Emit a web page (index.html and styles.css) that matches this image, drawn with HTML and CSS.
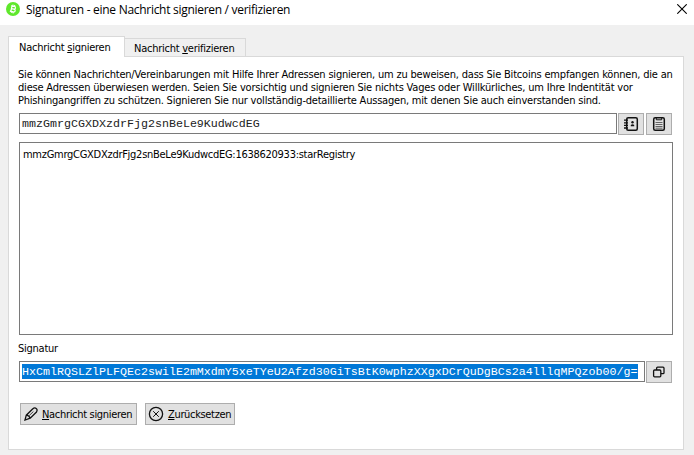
FILE: index.html
```html
<!DOCTYPE html>
<html lang="de">
<head>
<meta charset="utf-8">
<title>Signaturen - eine Nachricht signieren / verifizieren</title>
<link rel="stylesheet" href="styles.css">
</head>
<body>
<header class="titlebar">
  <svg class="logo" viewBox="0 0 14 14"><circle cx="7" cy="7" r="7" fill="#5fe82c"/><g transform="rotate(12 7 7)" fill="none" stroke="#fff" stroke-width="1.2"><path d="M4.4 4.2H7.8a1.3 1.3 0 0 1 0 2.7H5.4M5.4 4.2V9.8M4.4 9.8H8a1.4 1.4 0 0 0 0-2.9M6.2 2.8v1.4M7.9 2.8v1.4M6.2 9.8v1.4M7.9 9.8v1.4"/></g></svg>
  <h1 class="title">Signaturen - eine Nachricht signieren / verifizieren</h1>
  <svg class="close" viewBox="0 0 10 10"><path d="M.3.3l9.4 9.4M9.7.3L.3 9.7" stroke="#000" stroke-width="1.1"/></svg>
</header>
<main class="dialog">
  <nav class="tabs">
    <div class="tab active"><span class="t-sign">Nachricht <u>s</u>ignieren</span></div>
    <div class="tab"><span class="t-verify">Nachricht <u>v</u>erifizieren</span></div>
  </nav>
  <section class="panel">
    <div class="intro">
      <div class="line l1">Sie können Nachrichten/Vereinbarungen mit Hilfe Ihrer Adressen signieren, um zu beweisen, dass Sie Bitcoins empfangen können, die an</div>
      <div class="line l2">diese Adressen überwiesen werden. Seien Sie vorsichtig und signieren Sie nichts Vages oder Willkürliches, um Ihre Indentität vor</div>
      <div class="line l3">Phishingangriffen zu schützen. Signieren Sie nur vollständig-detaillierte Aussagen, mit denen Sie auch einverstanden sind.</div>
    </div>
    <div class="row address-row">
      <div class="field mono address">mmzGmrgCGXDXzdrFjg2snBeLe9KudwcdEG</div>
      <div class="btn icon-btn"><svg width="16" height="16" viewBox="0 0 16 16" fill="none" stroke="#111"><rect x="3.7" y="1.7" width="10.6" height="12.6" rx="1.5" stroke-width="1.5"/><path d="M1 4.2h4M1 6.8h4M1 9.4h4M1 12h4" stroke-width="1.3"/><circle cx="9.5" cy="6.2" r="1.2" fill="#111" stroke="none"/><path d="M7.8 10.2V9q1.7-1.6 3.4 0v1.2z" fill="#111" stroke="none"/></svg></div>
      <div class="btn icon-btn second"><svg width="16" height="16" viewBox="0 0 16 16" fill="none" stroke="#111"><rect x="2.7" y="1.7" width="10.6" height="12.6" rx="1.5" stroke-width="1.5"/><path d="M5.3 1.5v2.3h5.4V1.5" stroke-width="1"/><path d="M4.5 6.5h7M4.5 8.5h7M4.5 10.5h7M4.5 12.2h7" stroke="#555" stroke-width=".9"/></svg></div>
    </div>
    <div class="message"><span class="msg">mmzGmrgCGXDXzdrFjg2snBeLe9KudwcdEG:1638620933:starRegistry</span></div>
    <div class="label"><span class="sig-label">Signatur</span></div>
    <div class="row signature-row">
      <div class="field mono signature"><span class="selection">HxCmlRQSLZlPLFQEc2swilE2mMxdmY5xeTYeU2Afzd30GiTsBtK0wphzXXgxDCrQuDgBCs2a4lllqMPQzob00/g=</span></div>
      <div class="btn icon-btn"><svg width="14" height="14" viewBox="0 0 14 14" fill="none" stroke="#111" stroke-width="1.3"><path d="M4.6 5V3.2q0-1 1-1h5.4q1 0 1 1v4.5q0 1-1 1H9"/><rect x="1.6" y="5" width="7.2" height="6.8" rx="1"/></svg></div>
    </div>
    <div class="actions">
      <div class="btn sign-btn"><svg width="14" height="14" viewBox="0 0 14 14" fill="none" stroke="#111" stroke-width="1.3"><path d="M1 13l1.3-4.8L8.6 2q2-1.8 3.6-.6t.3 3.6L6.2 11.2zM2.3 8.2q2.7.1 3.9 3"/><path d="M5.2 8.6L9.4 4.5" stroke-width=".8"/></svg><span class="b-sign"><u>N</u>achricht signieren</span></div>
      <div class="btn reset-btn"><svg width="16" height="16" viewBox="0 0 16 16" fill="none" stroke="#111"><circle cx="8" cy="8" r="6.6" stroke-width="1.3"/><path d="M5.2 5.2l5.6 5.6M10.8 5.2l-5.6 5.6" stroke-width="1"/></svg><span class="b-reset"><u>Z</u>urücksetzen</span></div>
    </div>
  </section>
</main>
</body>
</html>
```

FILE: styles.css
```css
* { box-sizing: border-box; }
body { margin: 0; width: 694px; height: 455px; overflow: hidden; background: #f0f0f0; color: #000; font: 11px/13px "DejaVu Sans Condensed", "DejaVu Sans", sans-serif; font-stretch: condensed; display: flex; flex-direction: column; }
svg { display: block; flex: none; }
u { text-decoration: underline; text-underline-offset: 1px; text-decoration-thickness: 1px; text-decoration-skip-ink: none; }
span, .line { white-space: nowrap; }
.titlebar { height: 25px; background: #fff; display: flex; align-items: flex-start; padding: 0 7px 0 6px; }
.logo { width: 14px; height: 14px; margin-top: 2px; }
.title { margin: 1px 0 0 6px; font: 12px/18px "Open Sans", sans-serif; white-space: nowrap; letter-spacing: -.29px; }
.close { width: 10px; height: 10px; margin: 4px 0 0 auto; }
.dialog { padding: 11px 10px 5px 8px; flex: 1; display: flex; flex-direction: column; }
.tabs { display: flex; align-items: flex-end; height: 21px; margin-bottom: -1px; }
.tab { width: 121px; height: 19px; border: 1px solid #d9d9d9; border-left: 0; padding: 3px 0 0 9px; letter-spacing: -.25px; }
.tab.active { width: 117px; height: 21px; background: #fff; border-left: 1px solid #d9d9d9; border-bottom: 0; padding: 4px 0 0 10px; position: relative; }
.panel { flex: 1; background: #fff; border: 1px solid #d9d9d9; padding: 11px 10px 0 9px; }
.line { height: 13px; }
.l1 { letter-spacing: -.195px; }
.l2 { letter-spacing: -.19px; }
.l3 { letter-spacing: -.21px; }
.msg { letter-spacing: -.27px; }
.sig-label { letter-spacing: -.25px; }
.b-sign { letter-spacing: -.32px; }
.b-reset { letter-spacing: -.34px; }
.row { display: flex; align-items: flex-start; padding-left: 1px; }
.address-row { margin-top: 6px; }
.field { flex: none; height: 21px; border: 1px solid #7a7a7a; padding: 2px; background: #fff; }
.address { width: 598px; color: #222; }
.signature { width: 626px; }
.mono { font: 11.667px/17px "Liberation Mono", monospace; white-space: nowrap; }
.selection { display: block; width: 616px; height: 15px; background: #0078d7; color: #fff; }
.btn { flex: none; background: #e1e1e1; border: 1px solid #adadad; display: flex; align-items: center; height: 22px; }
.icon-btn { width: 26px; justify-content: center; margin-left: 1px; }
.icon-btn.second { margin-left: 2px; }
.message { width: 654px; height: 193px; margin: 7px 0 0 1px; border: 1px solid #7a7a7a; padding: 5px 3px; }
.label { margin: 7px 0 6px; height: 13px; }
.actions { display: flex; gap: 8px; margin: 20px 0 0 2px; }
.sign-btn { width: 117px; padding-left: 3px; gap: 4px; }
.reset-btn { width: 90px; padding-left: 2px; gap: 4px; }
```
